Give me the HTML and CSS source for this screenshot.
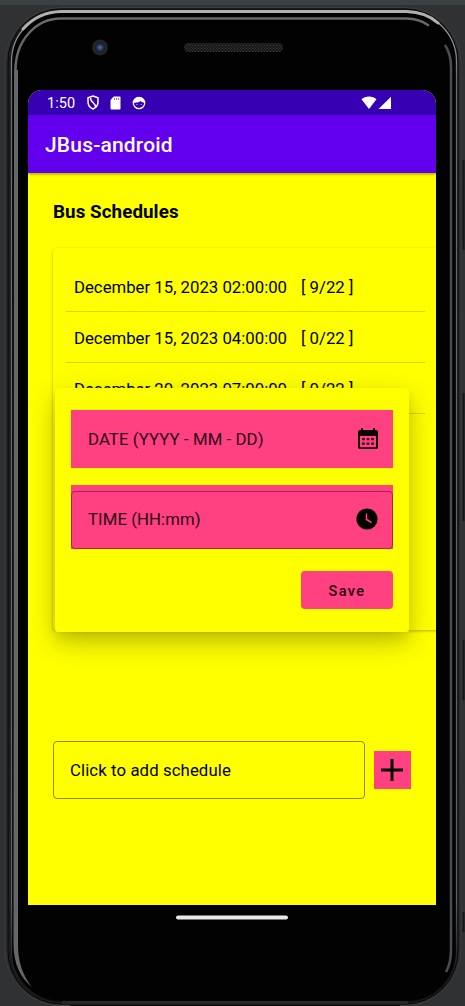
FILE: index.html
```html
<!DOCTYPE html>
<html lang="en">
<head>
<meta charset="utf-8">
<title>JBus-android</title>
<link rel="stylesheet" href="styles.css">
</head>
<body>
<div class="stage">
  <svg class="frame" viewBox="0 0 465 1006" aria-hidden="true">
    <defs>
      <linearGradient id="rim" x1="0" y1="0" x2="0" y2="1">
        <stop offset="0" stop-color="#a9a9a9"/><stop offset=".035" stop-color="#8d8d8f"/><stop offset=".07" stop-color="#6b6c6f"/><stop offset=".9" stop-color="#5d5f62"/><stop offset=".96" stop-color="#222"/><stop offset="1" stop-color="#101010"/>
      </linearGradient>
      <pattern id="mesh" width="3" height="3" patternUnits="userSpaceOnUse">
        <rect width="3" height="3" fill="#171717"/><path d="M0 0h1v1H0zM1.500 1.500h1v1h-1z" fill="#3c3c3c"/>
      </pattern>
      <radialGradient id="lens"><stop offset="0" stop-color="#5974a8"/><stop offset=".35" stop-color="#26375c"/><stop offset=".6" stop-color="#151c2b"/><stop offset=".7" stop-color="#252628"/><stop offset="1" stop-color="#202122"/></radialGradient>
    </defs>
    <rect width="465" height="5" fill="#3b4142"/>
    <path d="M463.500 160v90M463.500 393v128M463.500 640v60M463.500 912v20" stroke="#17181a" stroke-width="2"/>
    <rect x="5" y="7.500" width="456" height="998" rx="56" fill="#292a2b" stroke="#3c3d3e"/>
    <rect x="8" y="9" width="450" height="995" rx="53" fill="#1c1c1d" stroke="#080808"/>
    <rect x="11.500" y="11.500" width="445" height="990" rx="50" fill="#020202" stroke="url(#rim)" stroke-width="1.300"/>
    <path d="M23 29Q38 12 61.500 11.500H406.500Q426 12 438 23" fill="none" stroke="#b0b0b0" stroke-width="3" stroke-linecap="round"/>
    <path d="M15.500 70Q15.500 48 29 33T62 18.500H406Q420 19 428 25" fill="none" stroke="#68696d" stroke-width="2.500" stroke-linecap="round"/>
    <path d="M13.500 945Q14 973 32 987Q18 970 18 945V70H14Z" fill="#65666a"/>
    <path d="M445 45Q451 54 451 67V950Q451 963 446 972" fill="none" stroke="#4c4d50" stroke-width="2.500"/>
    <path d="M62 1002.500H408" stroke="#262626" stroke-width="3"/>
    <path d="M70 1005.500H400" stroke="#080808"/>
    <circle cx="100" cy="47.500" r="8" fill="url(#lens)"/>
    <rect x="184" y="43" width="99" height="9" rx="4.500" fill="url(#mesh)"/>
    <rect x="176" y="915.500" width="112" height="4" rx="2" fill="#e8e8e8"/>
  </svg>

  <main class="screen">
    <div class="status">
      <span class="clock">1:50</span>
      <svg class="shield" width="14" height="15" viewBox="0 0 14 15"><path d="M7 1 12 2.700V7c0 3.400-2 5.700-5 7C4 12.700 2 10.400 2 7V2.700ZM4.500 3c0 4.500 5 4.500 5 9" fill="none" stroke="#fff" stroke-width="1.500"/></svg>
      <svg class="sd" width="11" height="14" viewBox="0 0 11 14"><path d="M3.700.500H9.500Q10.500.500 10.500 1.500V12.500Q10.500 13.500 9.500 13.500H1.500Q.500 13.500.500 12.500V4Z" fill="#fff"/><path d="M4.500 2v2M6.500 2v2M8.500 2v2" stroke="#8f74d4"/></svg>
      <svg class="face" width="14" height="14" viewBox="0 0 14 14"><circle cx="7" cy="7" r="5.700" fill="none" stroke="#fff" stroke-width="1.300"/><path d="M1.500 6.500C2 2.500 4 1 7 1s5 1.500 5.500 5.500C11 6.500 9.500 6 8.500 5 7 6.500 4 7 1.500 6.500Z" fill="#fff"/><path d="M4.500 8.500h1M8.700 8.500h1" stroke="#fff" stroke-width=".8"/></svg>
      <svg class="signal" width="31" height="14" viewBox="0 0 31 14"><path d="M.500 3.200C4.500-.500 11.500-.500 15.500 3.200L8 13ZM30 .800V13H17.500Z" fill="#fff"/></svg>
    </div>
    <header class="appbar">JBus-android</header>
    <div class="content">
      <h1 class="heading">Bus Schedules</h1>
      <section class="card">
        <ul class="list">
          <li class="row"><span>December 15, 2023 02:00:00</span><span>[ 9/22 ]</span></li>
          <li class="row"><span>December 15, 2023 04:00:00</span><span>[ 0/22 ]</span></li>
          <li class="row"><span>December 20, 2023 07:00:00</span><span>[ 0/22 ]</span></li>
        </ul>
      </section>
      <div class="add">
        <div class="add-field">Click to add schedule</div>
        <button class="plus" aria-label="Add"><svg width="22" height="22" viewBox="0 0 22 22"><path d="M11 0v22M0 11h22" stroke="#000" stroke-width="3"/></svg></button>
      </div>
    </div>
    <div class="dialog">
      <div class="field"><span>DATE (YYYY - MM - DD)</span>
        <svg width="20" height="22" viewBox="0 0 20 22"><path fill-rule="evenodd" d="M3 0h2v2h10V0h2v2h1q2 0 2 2v15q0 2-2 2H2q-2 0-2-2V4q0-2 2-2h1ZM2 8v11.200h16V8Z" fill="#100007"/><path d="M4 10h2.800v2.300H4zM8.600 10h2.800v2.300H8.600zM13.200 10H16v2.300h-2.800zM4 14.500h2.800v2.300H4zM8.600 14.500h2.800v2.300H8.600zM13.200 14.500H16v2.300h-2.800z" fill="#3d0c1d"/></svg>
      </div>
      <div class="time"><div class="outline"><span>TIME (HH:mm)</span>
        <svg width="22" height="22" viewBox="0 0 22 22"><circle cx="11" cy="11" r="10.600" fill="#000"/><path d="M10.500 5.500v6l5 3" fill="none" stroke="#ff4081" stroke-width="1.500"/></svg>
      </div></div>
      <button class="save">Save</button>
    </div>
  </main>
</div>
</body>
</html>
```
FILE: styles.css
```css
* { box-sizing: border-box; }
body { margin: 0; background: #2f3132; font-family: Roboto, sans-serif; color: #000; }
.stage { position: relative; width: 465px; height: 1006px; padding: 90px 29px 0 28px; overflow: hidden; }
.frame { position: absolute; inset: 0; width: 465px; height: 1006px; }
.screen { position: relative; display: flex; flex-direction: column; width: 408px; height: 815px; overflow: hidden; background: #ff0; border-radius: 14px 14px 0 0; }
.status { display: flex; align-items: center; flex: none; height: 25px; padding: 0 44px 0 19px; background: #3700b3; color: #fff; }
.clock { width: 39px; padding-top: 1px; font-size: 14.500px; letter-spacing: .1px; }
.sd { margin-left: 10px; }
.face { margin-left: 11px; }
.signal { margin-left: auto; }
.appbar { flex: none; height: 58px; padding-left: 17px; line-height: 61px; background: #6200ee; color: #fff; font-size: 21px; font-weight: 500; letter-spacing: .18px; box-shadow: 0 1px 3px rgba(0,0,0,.4); }
.content { flex: 1; padding: 26px 0 0 25px; }
.heading { margin: 0; height: 49px; line-height: 26px; font-size: 18.800px; font-weight: 700; letter-spacing: .07px; }
.card { height: 382px; margin-right: -8px; padding: 13px 19px 0 13px; border-radius: 4px; box-shadow: 0 1px 3px rgba(0,0,0,.3); }
.list { margin: 0; padding: 0; list-style: none; }
.row { display: flex; gap: 14px; height: 51px; padding-left: 8px; line-height: 52px; font-size: 16.750px; border-bottom: 1px solid rgba(0,0,0,.16); }
.add { display: flex; align-items: center; gap: 9px; margin-top: 111px; }
.add-field { width: 312px; height: 58px; padding-left: 16px; line-height: 57px; font-size: 16.750px; letter-spacing: .1px; border: 1px solid rgba(0,0,0,.45); border-radius: 4px; }
.plus { display: grid; place-items: center; width: 37px; height: 38px; padding: 0 1px 0 0; border: 0; background: #ff4081; }
.dialog { position: absolute; left: 27px; top: 298px; display: flex; flex-direction: column; width: 354px; height: 244px; padding: 22px 16px 23px; background: #ff0; border-radius: 3px; box-shadow: 0 10px 26px rgba(0,0,0,.25), 0 5px 10px rgba(0,0,0,.06); }
.field, .outline { display: flex; align-items: center; justify-content: space-between; height: 58px; padding: 0 15px 0 17px; font-size: 16.750px; letter-spacing: .08px; color: #2b0714; }
.field { background: #ff4081; }
.time { margin-top: 17px; padding-top: 6px; background: #ff4081; }
.outline { padding: 0 14px 2px 16px; border: 1px solid #a12951; border-radius: 4px; }
.save { align-self: flex-end; width: 92px; height: 38px; margin-top: 22px; padding: 2px 0 0; border: 0; border-radius: 4px; background: #ff4081; color: #26000d; font: 500 14.500px Roboto, sans-serif; letter-spacing: 1.400px; }
```
